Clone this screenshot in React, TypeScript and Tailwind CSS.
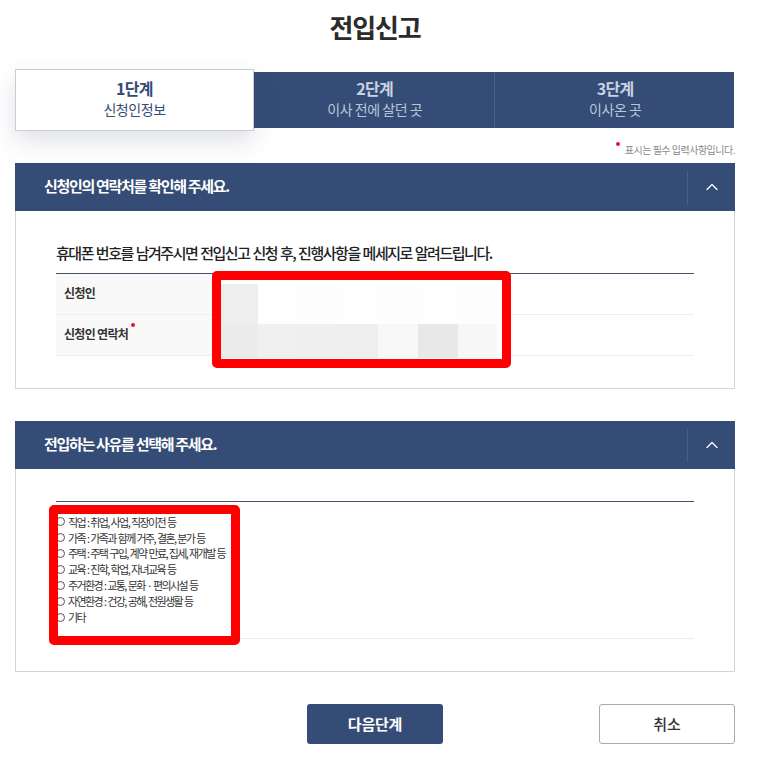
import React from 'react';
import { ChevronUp } from 'lucide-react';

const FONT = 'font-["Noto_Sans_CJK_KR","Noto_Sans",sans-serif]';

const reasons = [
  '직업 : 취업, 사업, 직장이전 등',
  '가족 : 가족과 함께 거주, 결혼, 분가 등',
  '주택 : 주택 구입, 계약 만료, 집세, 재개발 등',
  '교육 : 진학, 학업, 자녀교육 등',
  '주거환경 : 교통, 문화 · 편의시설 등',
  '자연환경 : 건강, 공해, 전원생활 등',
  '기타',
];

// blurred mosaic hiding the personal data
const tileWidths = ['w-[37px]', 'w-[39px]', 'w-[41px]', 'w-[40px]', 'w-[40px]', 'w-[40px]', 'w-[39px]'];
const topTiles = ['bg-[#eeeeee]', 'bg-[#fefefe]', 'bg-[#fdfdfd]', 'bg-[#fefefe]', 'bg-[#fdfdfd]', 'bg-[#fefefe]', 'bg-[#fdfdfd]'];
const bottomTiles = ['bg-[#ebebeb]', 'bg-[#f0f0f0]', 'bg-[#efefef]', 'bg-[#eeeeee]', 'bg-[#f8f8f8]', 'bg-[#e8e8e8]', 'bg-[#f7f7f7]'];

const Step = ({ title, sub, last }: { title: string; sub: string; last?: boolean }) => (
  <div className={`flex-1 flex flex-col items-center justify-center pb-[5px] pl-[2px] ${last ? '' : 'border-r border-[#4a6088]'}`}>
    <div className="text-[16px] leading-[22px] font-bold tracking-[-0.7px] text-[#c9d2e2]">{title}</div>
    <div className="text-[14px] leading-[20px] tracking-[-0.45px] text-[#bcc7da]">{sub}</div>
  </div>
);

const SectionHeader = ({ title }: { title: string }) => (
  <div className="h-[48px] bg-[#344c76] flex items-center justify-between">
    <h2 className="pl-[29px] pb-[2px] text-[15px] font-bold tracking-[-1.3px] text-white">{title}</h2>
    <div className="w-[48px] h-[33px] border-l border-[#4a6088] flex items-center justify-center">
      <ChevronUp className="w-[20px] h-[20px] text-white" strokeWidth={1.5} />
    </div>
  </div>
);

export default function App() {
  return (
    <div className={`${FONT} w-[775px] h-[760px] bg-white overflow-hidden`}>
      <h1 className="w-[750px] pt-[9px] h-[69px] text-center text-[26px] leading-[36px] font-bold tracking-[-1.2px] text-[#2b2b2b]">
        전입신고
      </h1>

      {/* Steps */}
      <div className="ml-[15px] w-[719px] flex items-start h-[62px]">
        <div className="w-[239px] h-[62px] pb-[5px] bg-white border border-[#cccccc] shadow-[0_10px_24px_rgba(50,70,110,0.16)] flex flex-col items-center justify-center relative z-10">
          <div className="text-[16px] leading-[22px] font-bold tracking-[-0.7px] text-[#344c76]">1단계</div>
          <div className="text-[14px] leading-[20px] tracking-[-0.45px] text-[#344c76]">신청인정보</div>
        </div>
        <div className="flex-1 mt-[3px] h-[56px] bg-[#344c76] flex">
          <Step title="2단계" sub="이사 전에 살던 곳" />
          <Step title="3단계" sub="이사온 곳" last />
        </div>
      </div>

      <div className="mx-[40px] mt-[10px] h-[22px] flex justify-end items-start text-[10px] leading-[17px] tracking-[-0.5px] text-[#8a8a8a]">
        <span className="w-[4px] h-[4px] mt-[1px] mr-[5px] rounded-full bg-[#e0182d]" />
        <span>표시는 필수 입력사항입니다.</span>
      </div>

      {/* Contact section */}
      <section className="mx-[15px] w-[720px]">
        <SectionHeader title="신청인의 연락처를 확인해 주세요." />
        <div className="h-[178px] border border-t-0 border-[#d5d5d5] px-[40px]">
          <p className="pt-[30px] h-[62px] text-[15px] leading-[24px] font-medium tracking-[-1.48px] [word-spacing:1px] text-[#222222] whitespace-nowrap">
            휴대폰 번호를 남겨주시면 전입신고 신청 후, 진행사항을 메세지로 알려드립니다.
          </p>
          <div className="relative border-t border-[#44546a]">
            <div className="h-[41px] flex border-b border-[#eeeeee]">
              <div className="w-[160px] bg-[#f9f9f9] pl-[8px] pb-[2px] flex items-center text-[12px] font-bold tracking-[-0.65px] text-[#333333]">신청인</div>
            </div>
            <div className="h-[41px] flex border-b border-[#eeeeee]">
              <div className="w-[160px] bg-[#f9f9f9] pl-[8px] pb-[2px] flex items-center text-[12px] font-bold tracking-[-0.7px] text-[#333333]">
                신청인 연락처
                <span className="w-[4px] h-[4px] ml-[3px] mb-[18px] rounded-full bg-[#e0182d]" />
              </div>
            </div>
            {/* Red redaction frame */}
            <div className="absolute left-[156px] top-[-3px] w-[299px] h-[97px] border-[9px] border-[#ff0000] rounded-[5px] bg-white">
              <div className="pt-[4px] flex flex-col">
                <div className="flex h-[40px]">
                  {topTiles.map((c, i) => (
                    <div key={i} className={`${tileWidths[i]} ${c}`} />
                  ))}
                </div>
                <div className="flex h-[34px]">
                  {bottomTiles.map((c, i) => (
                    <div key={i} className={`${tileWidths[i]} ${c}`} />
                  ))}
                </div>
              </div>
            </div>
          </div>
        </div>
      </section>

      {/* Reason section */}
      <section className="mx-[15px] w-[720px] mt-[32px]">
        <SectionHeader title="전입하는 사유를 선택해 주세요." />
        <div className="h-[203px] border border-t-0 border-[#d5d5d5] px-[40px] pt-[32px]">
          <div className="relative border-t border-[#44546a] h-[138px]">
            <ul className="pt-[12px]">
              {reasons.map((r) => (
                <li key={r} className="h-[15.9px] flex items-center whitespace-pre text-[11px] tracking-[-1.6px] [word-spacing:1px] text-[#333333]">
                  <span className="w-[9px] h-[9px] mr-[3px] rounded-full border border-[#555555] bg-white shrink-0" />
                  <span>{r}</span>
                </li>
              ))}
            </ul>
            <div className="absolute left-0 right-0 bottom-0 border-b border-[#eeeeee]" />
            <div className="absolute left-[-7px] top-[3px] w-[191px] h-[140px] border-[9px] border-[#ff0000] rounded-[5px] pointer-events-none" />
          </div>
        </div>
      </section>

      {/* Buttons */}
      <div className="mt-[32px] ml-[307px] w-[428px] flex justify-between">
        <button className="w-[136px] h-[40px] rounded-[3px] bg-[#344c76] text-white text-[15px] font-bold tracking-[-0.2px]">다음단계</button>
        <button className="w-[136px] h-[40px] rounded-[3px] bg-white border border-[#aaaaaa] text-[#333333] text-[15px] font-medium">취소</button>
      </div>
    </div>
  );
}
